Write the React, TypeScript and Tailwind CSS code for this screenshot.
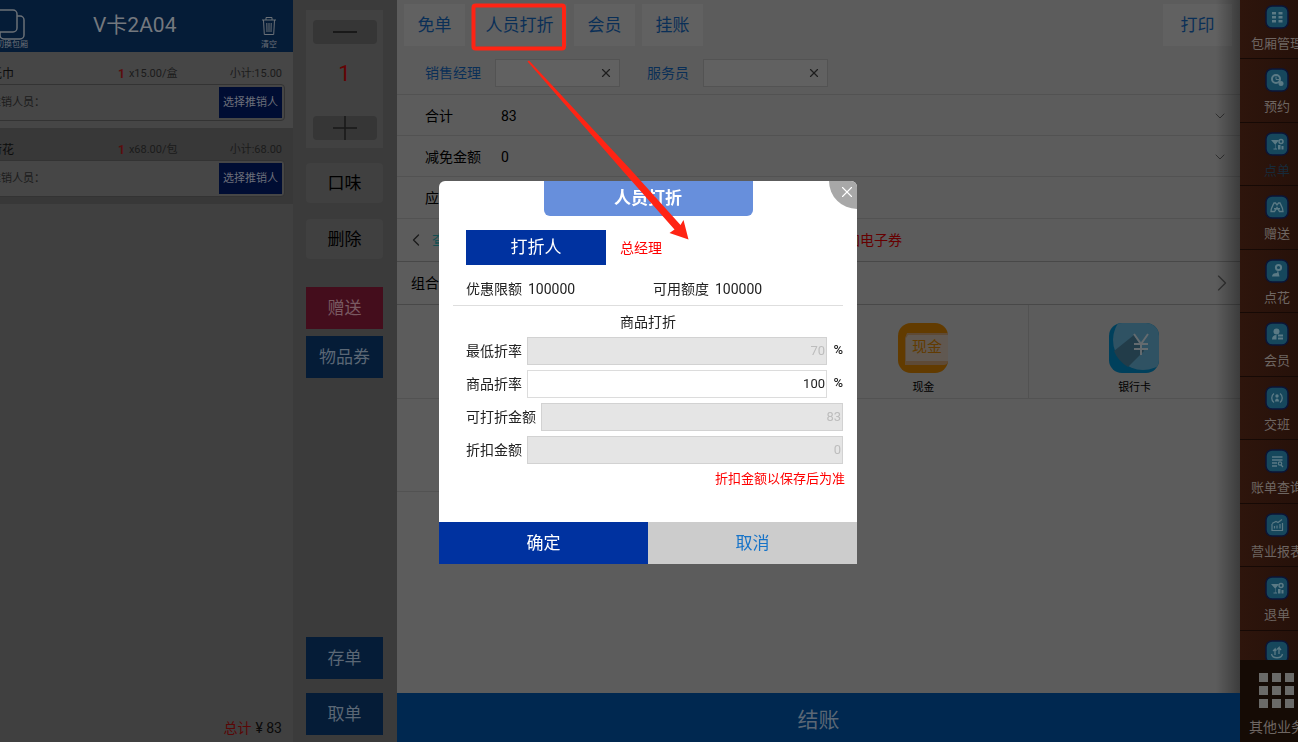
import type { ReactNode } from "react";
import { X, ChevronDown, ChevronLeft, ChevronRight } from "lucide-react";

const ORDER_ITEMS = [
  { id: "1", name: "纸巾", count: 1, price: "x15.00/盒", subtotal: "小计:15.00", active: false },
  { id: "2", name: "荷花", count: 1, price: "x68.00/包", subtotal: "小计:68.00", active: true },
];

const GLASS = (
  <>
    <path d="M5 7h8l-3.500 4.500v4h1.500v1H7.500v-1H9v-4z" fill="currentColor" />
    <circle cx="15" cy="8.500" r="2" stroke="currentColor" strokeWidth="1.500" fill="none" />
    <path d="M12 12h2.500v4.500H12zM15.500 13h2v3.500h-2z" fill="currentColor" />
  </>
);

const NAV_ITEMS: { label: string; active?: boolean; icon: ReactNode }[] = [
  {
    label: "包厢管理",
    icon: <path d="M6 6h4v2.500H6zM12.500 6h4v2.500h-4zM6 10h4v2.500H6zM12.500 10h4v2.500h-4zM6 14h4v2.500H6zM12.500 14h4v2.500h-4z" fill="currentColor" />,
  },
  {
    label: "预约",
    icon: (
      <>
        <circle cx="10" cy="10" r="4" stroke="currentColor" strokeWidth="2" fill="none" />
        <path d="M10 7.500v3h3" stroke="currentColor" fill="none" />
        <circle cx="15" cy="14.500" r="2.500" fill="currentColor" />
      </>
    ),
  },
  { label: "点单", active: true, icon: GLASS },
  {
    label: "赠送",
    icon: (
      <>
        <path d="M5 15.500c0-4 2-6 3-8.500h1.500l1.500 2 1.500-2H14c1 2.500 3 4.500 3 8.500h-3.500l-2.500-4-2.500 4z" stroke="currentColor" strokeWidth="1.300" fill="none" />
        <path d="M8 12h6v1.500H8z" fill="currentColor" />
      </>
    ),
  },
  {
    label: "点花",
    icon: (
      <>
        <circle cx="12.500" cy="7.500" r="2.600" stroke="currentColor" strokeWidth="2" fill="none" />
        <path d="M12 10l1.500 6.500H6c0-2.500 2-3.500 5-3.500z" fill="currentColor" />
      </>
    ),
  },
  {
    label: "会员",
    icon: (
      <>
        <circle cx="10.500" cy="8.500" r="3" fill="currentColor" />
        <path d="M6 16.500c0-3 1.500-4.500 4.500-4.500v4.500zM12 11.500h5v2h-5zM12 14.500h5v2h-5z" fill="currentColor" />
      </>
    ),
  },
  {
    label: "交班",
    icon: (
      <>
        <path d="M8 6.500c-3 2-3 7 0 9M14 6.500c3 2 3 7 0 9" stroke="currentColor" strokeWidth="1.300" fill="none" />
        <circle cx="11" cy="9" r="1.700" fill="currentColor" />
        <path d="M9 14.500c0-4 4-4 4 0z" fill="currentColor" />
      </>
    ),
  },
  {
    label: "账单查询",
    icon: (
      <>
        <path d="M6 7h10.500M6 10h10.500M6 13h5M6 16h5" stroke="currentColor" strokeWidth="1.300" />
        <circle cx="14" cy="13.500" r="1.700" stroke="currentColor" strokeWidth="1.200" fill="none" />
        <path d="M15 15l2 2" stroke="currentColor" strokeWidth="1.300" />
      </>
    ),
  },
  {
    label: "营业报表",
    icon: (
      <path d="M6 10v6.500h10.500V9M8.500 12v2.500M11 11.500v3M14 10v4.500M6 9.500l4-2 2 1 4-3" stroke="currentColor" strokeWidth="1.200" fill="none" />
    ),
  },
  { label: "退单", icon: GLASS },
  {
    label: "存酒",
    icon: <path d="M5.500 13c1 5 10 5 11 0M9 14V8l-2 2M9 8l1.500 1.500M13 13V6.500l-2 2M13 6.500L15 9" stroke="currentColor" strokeWidth="1.300" fill="none" />,
  },
];

function OrderPanel() {
  return (
    <aside className="w-[293px] shrink-0 overflow-hidden bg-[#404040]">
      <div className="-ml-5 flex h-full w-[313px] flex-col">
        <header className="flex h-[52px] shrink-0 items-center bg-[#051c37] px-4 text-[#6b7077]">
          <button className="mt-1.5 flex w-8 flex-col items-center">
            <svg width="32" height="32" viewBox="0 0 32 32" fill="none" stroke="currentColor" strokeWidth="1.500">
              <path d="M21 8h3a4 4 0 0 1 4 4v15a4 4 0 0 1-4 4H8a4 4 0 0 1-4-4v-3" />
              <rect x="-2" y="2" width="23" height="22" rx="4" />
            </svg>
            <span className="whitespace-nowrap text-[8px] leading-[10px]">切换包厢</span>
          </button>
          <h1 className="ml-[65px] mr-auto text-[21px] text-[#74787e]">V卡2A04</h1>
          <button className="mt-3.5 flex w-4 flex-col items-center">
            <svg width="16" height="20" viewBox="0 0 16 20" fill="none" stroke="currentColor">
              <path d="M1 4h14M5 4V1.500h6V4M2.500 4l.8 14.500h9.400L13.500 4M5.800 7l.2 9M8 7v9M10.200 7l-.2 9" />
            </svg>
            <span className="mt-1 whitespace-nowrap text-[8px] leading-[10px]">清空</span>
          </button>
        </header>
        <ul>
          {ORDER_ITEMS.map((item) => (
            <li key={item.id} className={`h-[76px] px-2 pt-3 ${item.active ? "bg-[#383838]" : "bg-[#464646]"}`}>
              <div className="flex h-5 items-center pl-0.5 pr-[3px] text-[11px] text-[#1b1b1b]">
                <span className="w-32 text-xs text-[#0c0c0c]">{item.name}</span>
                <span className="mr-1 text-xs font-bold text-[#5a0d0d]">{item.count}</span>
                <span>{item.price}</span>
                <span className="ml-auto">{item.subtotal}</span>
              </div>
              <div className="flex h-[37px] items-center justify-between rounded border border-[#333333] bg-[#464646] pl-px pr-0.5 text-[11px] text-[#1b1b1b]">
                <span className="pt-0.5">推销人员：</span>
                <button className="h-[31px] w-[63px] bg-[#000d33] pt-0.5 text-[#6c6f7a]">选择推销人</button>
              </div>
            </li>
          ))}
        </ul>
        <p className="mt-auto flex justify-end gap-1 pb-1 pr-[11px] text-sm text-[#0a0a0a]">
          <span className="text-[#5a0606]">总计</span>
          <span>¥ 83</span>
        </p>
      </div>
    </aside>
  );
}

function ActionColumn() {
  return (
    <div className="flex w-[104px] shrink-0 flex-col bg-[#3b3b3b] pb-[7px] pl-[13px] pr-3.5 pt-2.5 text-[17px]">
      <div className="flex h-[138px] flex-col items-center bg-[#414141] pb-2 pt-2.5">
        <button aria-label="减少" className="flex h-6 w-16 items-center justify-center rounded-sm bg-[#363636]">
          <span className="h-0.5 w-6 bg-[#191919]" />
        </button>
        <span className="mt-[18px] text-[22px] leading-6 text-[#640303]">1</span>
        <button aria-label="增加" className="mt-auto flex h-6 w-16 items-center justify-center rounded-sm bg-[#363636] text-[#191919]">
          <svg width="24" height="24" viewBox="0 0 24 24" stroke="currentColor" strokeWidth="1.500">
            <path d="M0 12h24M12 0v24" />
          </svg>
        </button>
      </div>
      <button className="mt-[15px] h-10 rounded bg-[#404040] pt-0.5 text-black">口味</button>
      <button className="mt-4 h-10 rounded bg-[#404040] pt-0.5 text-black">删除</button>
      <button className="mt-7 h-[42px] bg-[#440d1c] pt-0.5 text-[#7a5a62]">赠送</button>
      <button className="mt-[7px] h-[42px] bg-[#051c37] pt-0.5 text-[#5b6775]">物品券</button>
      <button className="mt-auto h-[42px] bg-[#051c37] pt-0.5 text-[#5b6775]">存单</button>
      <button className="mt-3.5 h-[42px] bg-[#051c37] pt-0.5 text-[#5b6775]">取单</button>
    </div>
  );
}

function StaffField({ id, label }: { id: string; label: string }) {
  return (
    <div className="flex items-center gap-3.5">
      <label htmlFor={id} className="text-[#0a2f57]">{label}</label>
      <div className="flex h-7 w-[125px] items-center border border-[#535353] bg-[#616161] pr-1.5">
        <input id={id} className="min-w-0 flex-1 bg-transparent px-2 outline-none" />
        <button aria-label={`清除${label}`} className="text-[#1e1e1e]">
          <X className="h-3.5 w-3.5" />
        </button>
      </div>
    </div>
  );
}

function CheckoutPanel() {
  return (
    <main className="relative flex min-w-0 flex-1 flex-col bg-[#5c5c5c] text-sm text-black">
      <div className="flex h-[50px] shrink-0 items-center gap-[7px] pl-[7px] pr-2 text-[17px] text-[#0a2f57]">
        <button className="h-[42px] w-[61px] bg-[#616161]">免单</button>
        <button className="h-[42px] w-[95px] bg-[#616161]">人员打折</button>
        <button className="h-[42px] w-[61px] bg-[#616161]">会员</button>
        <button className="h-[42px] w-[61px] bg-[#616161]">挂账</button>
        <button className="ml-auto h-[42px] w-[69px] bg-[#616161]">打印</button>
      </div>
      <div className="flex h-[45px] shrink-0 items-center gap-[27px] border-b border-[#525252] pl-7 pt-0.5">
        <StaffField id="manager" label="销售经理" />
        <StaffField id="waiter" label="服务员" />
      </div>
      <div className="flex h-[41px] shrink-0 items-center border-b border-[#525252] pl-7 pr-3 pt-0.5">
        <span className="w-[76px]">合计</span>
        <span>83</span>
        <ChevronDown className="ml-auto h-4 w-4 text-[#303030]" strokeWidth={1.5} />
      </div>
      <div className="flex h-[41px] shrink-0 items-center border-b border-[#525252] pl-7 pr-3 pt-0.5">
        <span className="w-[76px]">减免金额</span>
        <span>0</span>
        <ChevronDown className="ml-auto h-4 w-4 text-[#303030]" strokeWidth={1.5} />
      </div>
      <div className="flex h-[42px] shrink-0 items-center border-b border-[#525252] pl-7">
        <span className="w-[76px]">应收金额</span>
        <span>83</span>
      </div>
      <div className="flex h-[43px] shrink-0 items-center border-b border-[#484848] pl-[9px]">
        <ChevronLeft className="h-5 w-5 text-[#1a1a1a]" strokeWidth={1.5} />
        <a href="#coupon" className="ml-1.5 text-[#124f52]">查询优惠券</a>
        <a href="#ecoupon" className="ml-auto mr-[338px] text-[#660000]">添加电子券</a>
      </div>
      <div className="flex h-[43px] shrink-0 items-center border-b border-[#484848] pl-3.5 pr-1">
        <span>组合支付</span>
        <ChevronRight className="ml-auto h-7 w-7 text-[#303030]" strokeWidth={1} />
      </div>
      <div className="grid shrink-0 grid-cols-4 text-[11px]">
        <div className="h-[94px] border-b border-r border-[#525252]" />
        <div className="h-[94px] border-b border-r border-[#525252]" />
        <button className="flex h-[94px] flex-col items-center border-b border-r border-[#525252] pt-[18px]">
          <svg width="51" height="51" viewBox="0 0 51 51">
            <rect width="50" height="50" rx="13" fill="#623b00" />
            <path d="M9 10h41v29q-1 3-4 3H7V15z" fill="#5e4a36" />
            <path d="M10 12h40v26H8V15z" fill="#605851" />
            <text x="14" y="29" fontSize="15" fill="#623b00">现金</text>
          </svg>
          <span className="mt-1.5">现金</span>
        </button>
        <button className="flex h-[94px] flex-col items-center border-b border-[#525252] pt-[18px]">
          <svg width="51" height="51" viewBox="0 0 51 51">
            <defs>
              <clipPath id="card-tile">
                <rect width="50" height="50" rx="13" />
              </clipPath>
            </defs>
            <g clipPath="url(#card-tile)">
              <rect width="50" height="50" fill="#00405c" />
              <circle cx="34" cy="17" r="30" fill="#2f5263" />
              <path d="M25 12L5 28q4 10 14 16l16-16z" fill="#223c49" />
            </g>
            <path d="M25 11l7 10 7-10M32 21v11M25 21h14M25 26h14" stroke="#646b6f" strokeWidth="2" fill="none" />
          </svg>
          <span className="mt-1.5">银行卡</span>
        </button>
        <div className="h-[93px] border-b border-[#525252]" />
      </div>
      <button className="mt-auto h-[49px] shrink-0 bg-[#002850] pt-1 text-[21px] text-[#5b6775]">结账</button>
      <div className="pointer-events-none absolute bottom-[49px] right-0 top-0 w-6 bg-gradient-to-r from-transparent to-black/35" />
    </main>
  );
}

function Sidebar() {
  return (
    <nav className="w-[58px] shrink-0 overflow-hidden bg-[#29130b] text-[#6e6662]">
      <div className="flex h-full w-[74px] flex-col">
        <div className="min-h-0 flex-1 overflow-hidden">
          <div className="-mt-1 grid h-[698px] auto-rows-fr bg-gradient-to-r from-[#2e150c] to-[#241009]">
            {NAV_ITEMS.map((item) => (
              <a key={item.label} href="#nav" className="flex flex-col items-center border-b border-[#160905] pt-[9px] text-[13px]">
                <svg width="24" height="24" viewBox="-1 -1 24 24" className="shrink-0 text-[#5b7a85]">
                  <rect width="22" height="22" rx="6" fill="#16475c" stroke="#0b1638" strokeWidth="1.500" />
                  {item.icon}
                </svg>
                <span className={`mt-[5px] whitespace-nowrap leading-5 ${item.active ? "text-[#172a39]" : ""}`}>{item.label}</span>
              </a>
            ))}
          </div>
        </div>
        <a href="#more" className="flex h-[82px] shrink-0 flex-col items-center bg-[#150b05] pt-[13px] text-sm">
          <svg width="36" height="36" viewBox="0 0 36 36" fill="#6a6a68">
            <path d="M0 0h9v9H0zM13 0h9v9h-9zM26 0h9v9h-9zM0 13h9v9H0zM13 13h9v9h-9zM26 13h9v9h-9zM0 26h9v9H0zM13 26h9v9h-9zM26 26h9v9h-9z" />
          </svg>
          <span className="mt-2 whitespace-nowrap">其他业务</span>
        </a>
      </div>
    </nav>
  );
}

function DiscountField({ id, label, value, unit, disabled }: { id: string; label: string; value: string; unit?: string; disabled?: boolean }) {
  return (
    <div className="flex h-7 items-center">
      <label htmlFor={id} className="mr-[5px]">{label}</label>
      <input
        id={id}
        defaultValue={value}
        disabled={disabled}
        className="h-full min-w-0 flex-1 border border-[#dcdcdc] bg-white px-px text-right text-[13px] text-[#222] outline-none disabled:border-[#d2d2d2] disabled:bg-[#e5e5e5] disabled:text-[#bdbdbd]"
      />
      {unit && <span className="w-4 text-right text-[13px] font-medium">{unit}</span>}
    </div>
  );
}

function DiscountDialog() {
  return (
    <div className="fixed inset-0 flex items-center justify-center pr-0.5 pt-0.5">
      <section role="dialog" aria-labelledby="dialog-title" className="relative w-[418px] overflow-hidden rounded-t-md bg-white text-sm text-[#222]">
        <h2 id="dialog-title" className="mx-auto flex h-[35px] w-[209px] items-center justify-center rounded-b-md bg-[#678fdc] pt-px text-[17px] font-bold text-white">
          人员打折
        </h2>
        <button aria-label="关闭" className="absolute right-0 top-0 flex h-7 w-7 items-center justify-center rounded-bl-full bg-[#a8a8a8] pb-1.5 pl-2 text-white">
          <X className="h-[18px] w-[18px]" strokeWidth={1.5} />
        </button>
        <div className="h-[306px] px-3.5 pt-3.5">
          <div className="flex items-center px-[13px]">
            <button className="h-[35px] w-[140px] bg-[#0032a0] pt-px text-[17px] text-white">打折人</button>
            <span className="ml-3.5 pt-px text-[#ff0000]">总经理</span>
          </div>
          <div className="mt-[9px] flex h-[32px] items-center border-b border-[#dedede] px-[13px]">
            <p className="w-[187px]">优惠限额<span className="ml-1.5">100000</span></p>
            <p>可用额度<span className="ml-1.5">100000</span></p>
          </div>
          <h3 className="pb-[5px] pt-1.5 text-center leading-5">商品打折</h3>
          <div className="flex flex-col gap-[5px] pl-[13px]">
            <DiscountField id="min-rate" label="最低折率" value="70" unit="%" disabled />
            <DiscountField id="rate" label="商品折率" value="100" unit="%" />
            <DiscountField id="base" label="可打折金额" value="83" disabled />
            <DiscountField id="amount" label="折扣金额" value="0" disabled />
          </div>
          <p className="-mr-0.5 mt-1.5 text-right text-[13px] text-[#ff0000]">折扣金额以保存后为准</p>
        </div>
        <footer className="grid h-[42px] grid-cols-2 text-[17px]">
          <button className="bg-[#0032a0] pt-0.5 text-white">确定</button>
          <button className="bg-[#cccccc] pt-0.5 text-[#1673c8]">取消</button>
        </footer>
      </section>
    </div>
  );
}

export default function App() {
  return (
    <div className="relative flex h-screen overflow-hidden font-[Roboto,'Noto_Sans_CJK_SC',sans-serif]">
      <OrderPanel />
      <ActionColumn />
      <CheckoutPanel />
      <Sidebar />
      <DiscountDialog />
      {/* Callout from the toolbar button to the dialog */}
      <svg className="pointer-events-none absolute left-0 top-0" width="720" height="260" viewBox="0 0 720 260">
        <rect x="473.500" y="5.500" width="90.500" height="43" rx="2" fill="none" stroke="#ff2414" strokeWidth="4" />
        <path d="M527.500 61.500L529 60.500L631 170L680.500 225L683.500 220L688.500 239.500L669.500 233L674.500 229.500L622 170Z" fill="#ff2414" />
      </svg>
    </div>
  );
}
